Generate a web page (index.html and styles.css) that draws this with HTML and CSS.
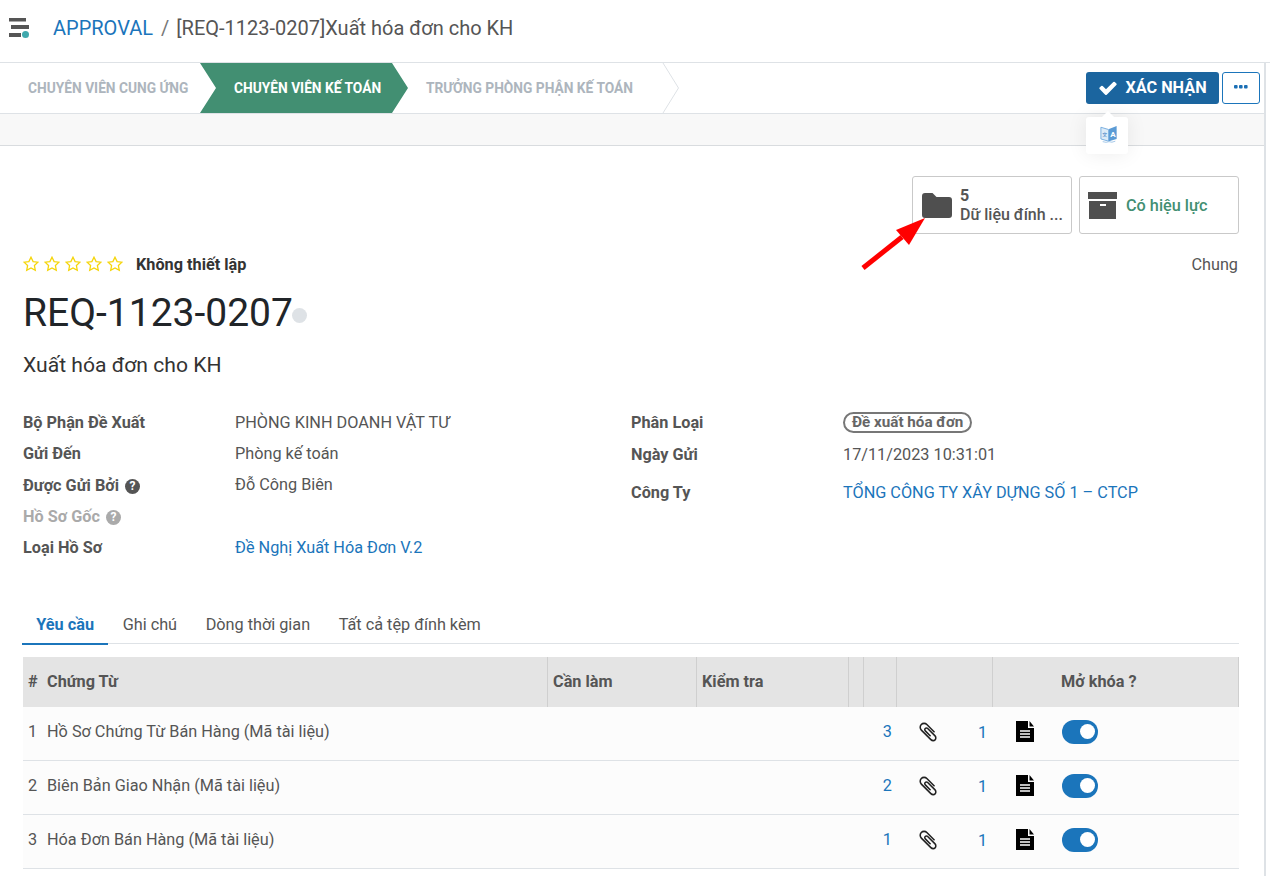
FILE: index.html
```html
<!DOCTYPE html>
<html lang="vi">
<head>
	<meta charset="UTF-8">
	<title>APPROVAL</title>
	<link rel="stylesheet" href="styles.css">
</head>
<body>
<svg class="defs" width="0" height="0">
	<symbol id="i-star" viewBox="0 0 16 16"><path class="star" d="M8 1.200l2.100 4.400 4.800.6-3.500 3.300.9 4.800L8 12l-4.300 2.300.9-4.800L1.100 6.200l4.800-.6z"/></symbol>
	<symbol id="i-clip" viewBox="0 0 1792 1792"><path d="M1596 1385q0 117-79 196t-196 79q-135 0-235-100l-777-776q-113-115-113-271 0-159 110-270t269-111q158 0 273 113l605 606q10 10 10 22 0 16-30.500 46.500t-46.500 30.500q-13 0-23-10l-606-607q-79-77-181-77-106 0-179 75t-73 181q0 105 76 181l776 777q63 63 145 63 64 0 106-42t42-106q0-82-63-145l-581-581q-26-24-60-24-29 0-48 19t-19 48q0 32 25 59l410 410q10 10 10 22 0 16-31 47t-47 31q-12 0-22-10l-410-410q-63-61-63-149 0-82 57-139t139-57q88 0 149 63l581 581q100 98 100 235z"/></symbol>
	<symbol id="i-file" viewBox="0 0 18 21"><path d="M0 0h12v7h6v14H0z"/><path d="M13.500 0L18 5.500h-4.500z"/><path d="M4 10h10M4 13h10M4 16h10" stroke="#fff" stroke-width="1.500"/></symbol>
</svg>
<div class="page">
	<header class="topbar">
		<svg class="menu-icon" width="24" height="24" viewBox="0 0 24 24">
			<rect x="1" y="1" width="17" height="3.500" fill="#555"/>
			<rect x="3" y="8" width="18" height="4" fill="#555"/>
			<rect x="1" y="16" width="12" height="4" fill="#555"/>
			<circle cx="17.500" cy="17.500" r="3.500" fill="#3fa9ad"/>
		</svg>
		<a class="crumb-link">APPROVAL</a>
		<span class="crumb-sep">/</span>
		<span class="crumb-now">[REQ-1123-0207]Xuất hóa đơn cho KH</span>
	</header>

	<div class="content">
		<div class="statusbar">
			<div class="steps">
				<div class="step step-first">CHUYÊN VIÊN CUNG ỨNG</div>
				<div class="step step-active">CHUYÊN VIÊN KẾ TOÁN</div>
				<div class="step step-last">TRƯỞNG PHÒNG PHẬN KẾ TOÁN
					<svg class="step-edge" width="18" height="50" viewBox="0 0 18 50"><path d="M1 0L16.500 25L1 50" fill="none" stroke="#dee2e6"/></svg>
				</div>
			</div>
			<div class="actions">
				<button class="btn-confirm">
					<svg width="20" height="20" viewBox="0 0 1792 1792"><path fill="#fff" d="M1671 566q0 40-28 68l-724 724-136 136q-28 28-68 28t-68-28l-136-136-362-362q-28-28-28-68t28-68l136-136q28-28 68-28t68 28l294 295 656-657q28-28 68-28t68 28l136 136q28 28 28 68z"/></svg>
					XÁC NHẬN
				</button>
				<button class="btn-more">
					<svg width="14" height="4" viewBox="0 0 14 4"><rect x="0" y="0" width="3.600" height="3.600" rx="1" fill="#1b6fb5"/><rect x="5" y="0" width="3.600" height="3.600" rx="1" fill="#1b6fb5"/><rect x="10" y="0" width="3.600" height="3.600" rx="1" fill="#1b6fb5"/></svg>
				</button>
			</div>
		</div>
		<div class="band"></div>

		<main class="sheet">
			<div class="smart-buttons">
				<div class="smart">
					<svg width="30" height="25" viewBox="0 0 30 25"><path fill="#4f4f4f" d="M3 0h7.500l4 4H27a3 3 0 0 1 3 3v15a3 3 0 0 1-3 3H3a3 3 0 0 1-3-3V3a3 3 0 0 1 3-3z"/></svg>
					<div class="smart-text"><b>5</b><span>Dữ liệu đính ...</span></div>
				</div>
				<div class="smart smart-box">
					<svg width="29" height="27" viewBox="0 0 29 27"><path fill="#4f4f4f" d="M0 0h29v7H0zM1 9h27v18H1z"/><rect x="12" y="12" width="6" height="2" fill="#fff"/></svg>
					<div class="smart-status">Có hiệu lực</div>
				</div>
			</div>

			<div class="rating-row">
				<div class="stars">
					<svg width="16" height="16"><use href="#i-star"/></svg>
					<svg width="16" height="16"><use href="#i-star"/></svg>
					<svg width="16" height="16"><use href="#i-star"/></svg>
					<svg width="16" height="16"><use href="#i-star"/></svg>
					<svg width="16" height="16"><use href="#i-star"/></svg>
				</div>
				<span class="rating-label">Không thiết lập</span>
				<span class="rating-right">Chung</span>
			</div>

			<h1 class="title">REQ-1123-0207<i class="title-dot"></i></h1>
			<div class="subtitle">Xuất hóa đơn cho KH</div>

			<div class="form">
				<div class="form-col form-left">
					<label>Bộ Phận Đề Xuất</label><span>PHÒNG KINH DOANH VẬT TƯ</span>
					<label>Gửi Đến</label><span>Phòng kế toán</span>
					<label>Được Gửi Bởi <i class="help">?</i></label><span class="up1">Đỗ Công Biên</span>
					<label class="muted">Hồ Sơ Gốc <i class="help">?</i></label><span></span>
					<label>Loại Hồ Sơ</label><a>Đề Nghị Xuất Hóa Đơn V.2</a>
				</div>
				<div class="form-col form-right">
					<label>Phân Loại</label><span><em class="pill">Đề xuất hóa đơn</em></span>
					<label>Ngày Gửi</label><span>17/11/2023 10:31:01</span>
					<label>Công Ty</label><a>TỔNG CÔNG TY XÂY DỰNG SỐ 1 – CTCP</a>
				</div>
			</div>

			<nav class="tabs">
				<a class="tab tab-active">Yêu cầu</a>
				<a class="tab">Ghi chú</a>
				<a class="tab">Dòng thời gian</a>
				<a class="tab">Tất cả tệp đính kèm</a>
			</nav>

			<table class="lines">
				<colgroup>
					<col class="c-name"><col class="c-todo"><col class="c-check"><col class="c-a"><col class="c-b"><col class="c-c"><col>
				</colgroup>
				<thead>
					<tr>
						<th><span class="num">#</span>Chứng Từ</th>
						<th>Cần làm</th>
						<th>Kiểm tra</th>
						<th></th><th></th><th></th>
						<th class="th-unlock">Mở khóa ?</th>
					</tr>
				</thead>
				<tbody>
					<tr>
						<td><span class="num">1</span>Hồ Sơ Chứng Từ Bán Hàng (Mã tài liệu)</td>
						<td></td><td></td><td></td>
						<td class="count">3</td>
						<td class="clip-cell"><svg class="clip" width="22" height="22"><use href="#i-clip"/></svg><span class="count-2">1</span></td>
						<td class="last-cell"><div class="last-wrap"><svg width="18" height="21"><use href="#i-file"/></svg><span class="toggle"></span></div></td>
					</tr>
					<tr>
						<td><span class="num">2</span>Biên Bản Giao Nhận (Mã tài liệu)</td>
						<td></td><td></td><td></td>
						<td class="count">2</td>
						<td class="clip-cell"><svg class="clip" width="22" height="22"><use href="#i-clip"/></svg><span class="count-2">1</span></td>
						<td class="last-cell"><div class="last-wrap"><svg width="18" height="21"><use href="#i-file"/></svg><span class="toggle"></span></div></td>
					</tr>
					<tr>
						<td><span class="num">3</span>Hóa Đơn Bán Hàng (Mã tài liệu)</td>
						<td></td><td></td><td></td>
						<td class="count">1</td>
						<td class="clip-cell"><svg class="clip" width="22" height="22"><use href="#i-clip"/></svg><span class="count-2">1</span></td>
						<td class="last-cell"><div class="last-wrap"><svg width="18" height="21"><use href="#i-file"/></svg><span class="toggle"></span></div></td>
					</tr>
				</tbody>
			</table>
		</main>
	</div>

	<!-- popup dich va mui ten chu thich nam de len noi dung -->
	<div class="translate-pop">
		<svg width="18" height="18" viewBox="0 0 20 20">
			<path d="M1 2.500L9.500 5v13L1 15.500z" fill="#dcebf8" stroke="#6fa8dc" stroke-width="1"/>
			<path d="M10 4.500L18.500 1v14.500L10 18z" fill="#5b9bd5"/>
			<path d="M3 18.500q4 1.500 7 0q3 1.500 7-.5" fill="none" stroke="#9cc3e6" stroke-width="1"/>
			<text x="11.500" y="13" font-family="Roboto" font-size="9" font-weight="700" fill="#fff">A</text>
			<text x="2.500" y="12" font-family="Noto Sans CJK SC" font-size="5.500" fill="#3f82c4">文</text>
		</svg>
	</div>
	<svg class="arrow" width="70" height="64" viewBox="0 0 70 64">
		<path d="M3 58L42 27" stroke="#f00" stroke-width="5" fill="none"/>
		<path d="M65 8L36 20L49 35z" fill="#f00"/>
	</svg>
</div>
</body>
</html>
```

FILE: styles.css
```css
*{
	margin: 0;
	padding: 0;
	box-sizing: border-box;
}
html,body{
	height: 100%;
	overflow: hidden;
	background: #fff;
}
body{
	font-family: Roboto, "Noto Sans", sans-serif;
	font-size: 16.250px;
	color: #555;
}
a{
	color: #1b75bb;
}
.defs{
	position: absolute;
}
.page{
	position: relative;
	width: 1270px;
	height: 876px;
	overflow: hidden;
}

/* thanh tren */
.topbar{
	height: 63px;
	border-bottom: 1px solid #dee2e6;
	display: flex;
	align-items: center;
	padding-left: 8px;
	padding-bottom: 7px;
	font-size: 20px;
}
.menu-icon{
	margin-right: 21px;
	margin-top: 2px;
}
.crumb-sep{
	margin: 0 7px 0 8px;
	color: #777;
}
.crumb-now{
	color: #555;
}

.content{
	width: 1266px;
	height: 813px;
	border-right: 2px solid #dee2e6;
}

/* thanh trang thai */
.statusbar{
	height: 51px;
	border-bottom: 1px solid #dee2e6;
	display: flex;
	justify-content: space-between;
	padding-right: 4px;
}
.steps{
	display: flex;
	height: 50px;
}
.step{
	display: flex;
	align-items: center;
	font-size: 13.750px;
	font-weight: 700;
	color: #adb5bd;
	white-space: nowrap;
}
.step-first{
	width: 200px;
	padding-left: 28px;
}
.step-active{
	width: 208px;
	padding-left: 34px;
	background: #428f72;
	color: #fff;
	clip-path: polygon(0 0, 192px 0, 100% 50%, 192px 100%, 0 100%, 16px 50%);
}
.step-last{
	position: relative;
	width: 272px;
	padding-left: 18px;
}
.step-edge{
	position: absolute;
	right: 0;
	top: 0;
}
.actions{
	display: flex;
	gap: 3px;
	padding-top: 9px;
}
.btn-confirm{
	width: 133px;
	height: 32px;
	background: #1b659f;
	border: none;
	border-radius: 3px;
	color: #fff;
	font-family: Roboto, sans-serif;
	font-size: 16.250px;
	font-weight: 700;
	display: flex;
	align-items: center;
	justify-content: center;
	gap: 7px;
	padding-bottom: 1px;
}
.btn-more{
	width: 38px;
	height: 32px;
	background: #fff;
	border: 1px solid #1b75bb;
	border-radius: 3px;
	display: flex;
	align-items: center;
	justify-content: center;
	padding-bottom: 2px;
}
.band{
	height: 32px;
	background: #f8f8f8;
	border-bottom: 1px solid #d9dcdf;
}

/* noi dung */
.sheet{
	padding: 30px 25px 0 23px;
}
.smart-buttons{
	display: flex;
	justify-content: flex-end;
	gap: 7px;
}
.smart{
	width: 160px;
	height: 58px;
	border: 1px solid #c9c9c9;
	border-radius: 3px;
	display: flex;
	align-items: center;
	padding-left: 9px;
	gap: 8px;
}
.smart-box{
	padding-left: 8px;
	gap: 9px;
}
.smart-text{
	display: flex;
	flex-direction: column;
	line-height: 19px;
	font-size: 16px;
	font-weight: 500;
	white-space: nowrap;
}
.smart-text b{
	font-weight: 700;
}
.smart-status{
	color: #428f72;
	font-weight: 500;
}
.rating-row{
	display: flex;
	align-items: center;
	height: 20px;
	margin-top: 20px;
}
.stars{
	display: flex;
	gap: 5px;
	margin-right: 13px;
}
.stars svg{
	display: block;
}
.star{
	fill: none;
	stroke: #f5d50a;
	stroke-width: 1.300;
}
.rating-label{
	font-weight: 700;
	color: #333;
}
.rating-right{
	margin-left: auto;
	margin-right: 1px;
}
.title{
	font-size: 39px;
	font-weight: 400;
	color: #212529;
	line-height: 46px;
	margin-top: 16px;
	display: flex;
	align-items: center;
}
.title-dot{
	width: 15px;
	height: 15px;
	border-radius: 50%;
	background: #dee2e6;
	margin: 4px 0 0 -1px;
}
.subtitle{
	font-size: 21.120px;
	color: #333;
	line-height: 26px;
	margin-top: 16px;
}
.form{
	display: grid;
	grid-template-columns: 608px 1fr;
	margin-top: 29px;
}
.form-col{
	display: grid;
	grid-template-columns: 212px 1fr;
	grid-template-rows: 31px 31px 32px 31px 31px;
	align-items: center;
}
.form-right{
	grid-template-rows: 31px 32px 44px;
}
.form-col label{
	font-weight: 700;
}
.form-col label.muted{
	color: #aaa;
}
.up1{
	margin-bottom: 2px;
}
.help{
	display: inline-block;
	width: 15px;
	height: 15px;
	border-radius: 50%;
	background: #555;
	color: #fff;
	font-size: 12px;
	font-style: normal;
	line-height: 15px;
	text-align: center;
	margin-left: 2px;
	vertical-align: 1px;
}
.muted .help{
	background: #aaa;
}
.pill{
	display: inline-block;
	border: 2px solid #777;
	border-radius: 12px;
	font-style: normal;
	font-weight: 700;
	font-size: 15.200px;
	line-height: 17px;
	padding: 0 7px;
	color: #666;
}
.tabs{
	display: flex;
	margin: 41px 0 0 -1px;
	height: 40px;
	border-bottom: 1px solid #dee2e6;
}
.tab{
	color: #555;
	padding: 0 14.300px;
	line-height: 41px;
	height: 41px;
}
.tab-active{
	color: #1b75bb;
	font-weight: 700;
	border-bottom: 2px solid #1b75bb;
}

/* bang */
.lines{
	table-layout: fixed;
	width: 1216px;
	border-collapse: separate;
	border-spacing: 0;
	margin-top: 13px;
}
.c-name{ width: 525px; }
.c-todo{ width: 149px; }
.c-check{ width: 152px; }
.c-a{ width: 15px; }
.c-b{ width: 33px; }
.c-c{ width: 96px; }
.lines th{
	height: 50px;
	background: #e4e4e4;
	text-align: left;
	padding: 0 0 2px 5px;
	font-weight: 700;
	border-right: 1px solid #cfcfcf;
}
.lines th.th-unlock{
	padding-left: 68px;
}
.lines td{
	height: 54px;
	background: #fcfcfc;
	border-bottom: 1px solid #dee2e6;
	padding: 0 0 4px 5px;
	white-space: nowrap;
}
.num{
	display: inline-block;
	width: 19px;
}
.lines td.count{
	color: #1b75bb;
	text-align: right;
	padding-left: 0;
	padding-right: 5px;
}
.clip{
	fill: #222;
	vertical-align: middle;
	margin-left: 20px;
}
.count-2{
	color: #1b75bb;
	margin-left: 39px;
	vertical-align: -2px;
}
.lines td.clip-cell{
	padding-left: 0;
}
.lines td.last-cell{
	padding-left: 23px;
}
.last-wrap{
	display: flex;
	align-items: center;
	gap: 28px;
}
.last-wrap svg{
	display: block;
}
.toggle{
	display: block;
	width: 36px;
	height: 24px;
	border-radius: 12px;
	background: #1b75bb;
	position: relative;
}
.toggle::after{
	content: "";
	position: absolute;
	right: 3.500px;
	top: 4.500px;
	width: 15px;
	height: 15px;
	border-radius: 50%;
	background: #fff;
}
.translate-pop{
	position: absolute;
	left: 1086px;
	top: 117px;
	width: 42px;
	height: 37px;
	background: #fff;
	border-radius: 3px;
	box-shadow: 0 0 20px rgba(0,0,0,0.08);
	display: flex;
	align-items: center;
	justify-content: center;
	padding: 0 0 3px 4px;
}
.translate-pop::before{
	content: "";
	position: absolute;
	left: 16px;
	top: -6px;
	border-left: 6px solid transparent;
	border-right: 6px solid transparent;
	border-bottom: 6px solid #fff;
}
.arrow{
	position: absolute;
	left: 860px;
	top: 210px;
}
```
